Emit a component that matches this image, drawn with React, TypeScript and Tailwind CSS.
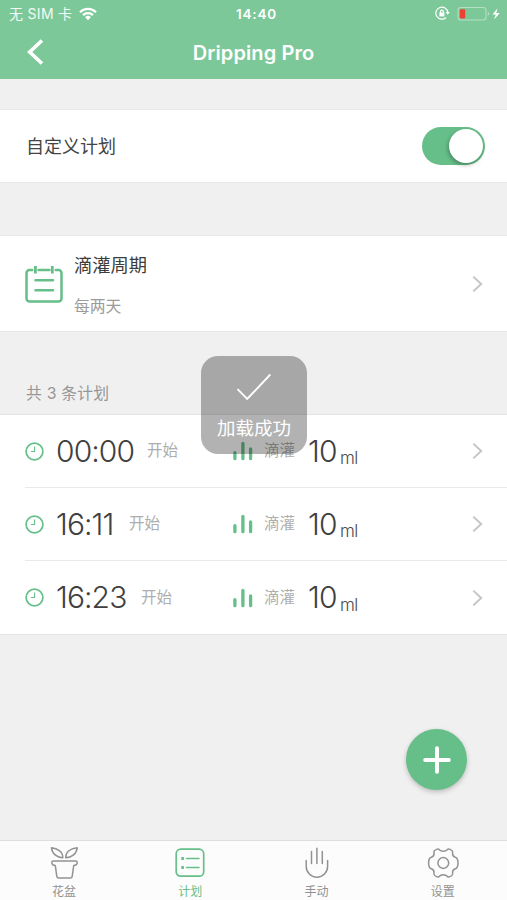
import React from 'react';

interface Plan {
  id: number;
  time: string;
  timeWidth: string;
  amount: number;
}

const plans: Plan[] = [
  { id: 1, time: '00:00', timeWidth: 'w-[91px]', amount: 10 },
  { id: 2, time: '16:11', timeWidth: 'w-[73px]', amount: 10 },
  { id: 3, time: '16:23', timeWidth: 'w-[85px]', amount: 10 },
];

const ChevronRight: React.FC = () => (
  <svg width="11" height="18" viewBox="0 0 11 18" fill="none" stroke="#c4c4c4" strokeWidth="1.9">
    <path d="M1.3 1.6 9.2 9l-7.9 7.4" />
  </svg>
);

const ClockIcon: React.FC = () => (
  <svg width="19" height="19" viewBox="0 0 19 19" fill="none" stroke="#66bf89">
    <circle cx="9.5" cy="9.5" r="8.4" strokeWidth="1.7" />
    <path d="M9.6 4.5v5H6" strokeWidth="1.1" />
  </svg>
);

const BarsIcon: React.FC = () => (
  <svg width="20" height="20" viewBox="0 0 20 20" fill="none" stroke="#66bf89" strokeWidth="3.3" strokeLinecap="round">
    <path d="M1.9 11.7v6M9.9 2.3v15.4M17.6 8v9.7" />
  </svg>
);

const CalendarIcon: React.FC = () => (
  <svg width="38" height="38" viewBox="0 0 38 38" fill="none" stroke="#66bf89" strokeWidth="2.5" strokeLinecap="round">
    <path d="M7.2 5H4.5A3 3 0 0 0 1.5 8v25.5a3 3 0 0 0 3 3h29a3 3 0 0 0 3-3V8a3 3 0 0 0-3-3h-2.7M13.5 5h11" />
    <path d="M10.4 1v7.4M27.3 1v7.4" strokeWidth="2.8" strokeLinecap="butt" />
    <path d="M10.5 15.3H28M10.5 25.3H28" />
  </svg>
);

const StatusBar: React.FC = () => (
  <div className="grid grid-cols-3 items-center h-[27px] pl-[9px] pr-1.5 text-[14px]">
    <div className="flex items-center whitespace-nowrap">
      <span className="w-[70px] tracking-[0.3px] text-white/90">无 SIM 卡</span>
      <svg width="18" height="14" viewBox="0 0 18 14" fill="none" stroke="#fff" strokeWidth="2.3">
        <path d="M1 5.2a11.4 11.4 0 0 1 16 0M4 8.2a7.2 7.2 0 0 1 10 0" />
        <path d="M6.1 10.2a4.2 4.2 0 0 1 5.8 0L9 13.2z" fill="#fff" stroke="none" />
      </svg>
    </div>
    <span className="pt-px pl-[3px] text-center font-semibold text-[13.5px] tracking-[0.8px]">14:40</span>
    <div className="flex items-center justify-end">
      <svg width="15" height="15" viewBox="0 0 15 15" fill="none" stroke="#fff" strokeWidth="1.2">
        <path d="M12.8 6.5A6 6 0 1 0 11 11.5" />
        <path d="M10.6 6.1h4.2l-2.1 2.7z" fill="#fff" stroke="none" />
        <rect x="4.4" y="6.6" width="5" height="3.8" fill="#fff" stroke="none" />
        <path d="M5.500 7V5.600a1.400 1.400 0 0 1 2.800 0V7" />
      </svg>
      <svg className="ml-[7px]" width="44" height="16" viewBox="0 0 44 16" fill="none">
        <rect x="1" y="1.5" width="28" height="12.5" rx="3" stroke="#b5dfc4" strokeWidth="1.1" />
        <path d="M30.8 5.7q3 2 0 4.2z" fill="#b5dfc4" />
        <rect x="2.8" y="3.2" width="5.4" height="9.2" rx="1.2" fill="#ed4134" />
        <path d="m40.5 2.3-5 6.3h3.2l-1.6 5 5.7-6.6h-3.5z" fill="#fff" />
      </svg>
    </div>
  </div>
);

const Header: React.FC = () => (
  <header className="h-[79px] bg-[#7cc899] text-white">
    <StatusBar />
    <div className="grid grid-cols-[100px_1fr_100px] items-center h-[50px]">
      <svg className="ml-[27px]" width="17" height="26" viewBox="0 0 17 26" fill="none" stroke="#fff" strokeWidth="3.7">
        <path d="M15 1.5 2.7 13 15 24.5" />
      </svg>
      <h1 className="pt-px text-center text-[20px] font-semibold tracking-[0.1px]">Dripping Pro</h1>
    </div>
  </header>
);

const PlanRow: React.FC<{ plan: Plan; last: boolean }> = ({ plan, last }) => (
  <li className={`flex items-center h-[73px] ml-[25px] pr-6 ${last ? '' : 'border-b border-[#e9e9e9]'}`}>
    <div className="flex items-center w-[208px] whitespace-nowrap">
      <ClockIcon />
      <span className={`ml-3 text-[30px] font-light tracking-[-0.9px] text-[#404040] ${plan.timeWidth}`}>
        {plan.time}
      </span>
      <span className="text-[15.5px] text-[#aeaeae]">开始</span>
    </div>
    <BarsIcon />
    <span className="ml-[11px] w-[44px] text-[15.5px] text-[#aeaeae]">滴灌</span>
    <span className="w-[32px] text-[30px] font-light tracking-[-0.9px] text-[#404040]">{plan.amount}</span>
    <span className="mt-4 text-[17px] font-light tracking-[-0.6px] text-[#4a4a4a]">ml</span>
    <div className="ml-auto">
      <ChevronRight />
    </div>
  </li>
);

const tabs = [
  {
    label: '花盆',
    icon: (
      <>
        <path d="M3.5 1.8C9 2.5 15 5.5 14.8 11.7 9.5 11.7 4.2 8.2 3.5 1.8zM29.2 1.8C23.5 2.5 17.5 5.5 17.7 11.7 23.3 11.7 28.5 8.2 29.2 1.8z" />
        <path d="M5.3 15h22.4q1.5 0 1.5 1.6 0 2.9-3.5 2.9l-1.5 10.8q-.2 1.6-2 1.6H10.8q-1.8 0-2-1.6L7.3 19.5q-3.5 0-3.5-2.9 0-1.6 1.5-1.6z" />
      </>
    ),
  },
  {
    label: '计划',
    icon: (
      <>
        <rect x="2.2" y="3.2" width="27.5" height="27" rx="4.5" strokeWidth="1.7" />
        <path d="M12.5 12.5H25M12.5 21.5H25" />
        <path d="M7.3 12.5h2.6M7.3 21.5h2.6" strokeWidth="3" strokeLinecap="butt" />
      </>
    ),
  },
  {
    label: '手动',
    icon: <path d="M5.2 14.5v6a10.7 10.7 0 0 0 21.4 0v-6M10.5 5.5v12M15.9 2.2v15.3M21.3 5.5v12" />,
  },
  {
    label: '设置',
    icon: (
      <g transform="translate(16.3 17)">
        <path d="M0-11.7Q2.5-11.7 4.3-13.6 5.5-14.8 8.6-12.5 9.8-11.5 9.3-9.5 9-6.8 12-5.8 14.7-5 14.7 0 14.7 5 12 5.8 9 6.8 9.3 9.5 9.8 11.5 8.6 12.5 5.5 14.8 4.3 13.6 2.5 11.7 0 11.7-2.5 11.7-4.3 13.6-5.5 14.8-8.6 12.5-9.8 11.5-9.3 9.5-9 6.8-12 5.8-14.7 5-14.7 0-14.7-5-12-5.8-9-6.8-9.3-9.5-9.8-11.5-8.6-12.5-5.5-14.8-4.3-13.6-2.5-11.7 0-11.7z" />
        <circle r="5.4" />
      </g>
    ),
  },
];

const TabBar: React.FC<{ active: string }> = ({ active }) => (
  <nav className="grid grid-cols-4 h-[60px] px-px border-t border-[#dedede] bg-[#fcfcfc]">
    {tabs.map((tab) => (
      <div
        key={tab.label}
        className={`flex flex-col items-center pt-[5px] ${tab.label === active ? 'text-[#66bf89]' : 'text-[#929292]'}`}
      >
        <svg width="32" height="34" viewBox="0 0 32 34" fill="none" stroke="currentColor" strokeWidth="1.5" strokeLinecap="round" strokeLinejoin="round">
          {tab.icon}
        </svg>
        <span className="mt-1 text-[12px] leading-[16px]">{tab.label}</span>
      </div>
    ))}
  </nav>
);

const Toast: React.FC<{ message: string }> = ({ message }) => (
  <div className="absolute left-[201px] top-[356px] flex flex-col items-center w-[106px] h-[98px] rounded-[17px] bg-black/30 text-white">
    <svg className="mt-[17px]" width="36" height="28" viewBox="0 0 36 28" fill="none" stroke="#fff" strokeWidth="1.9">
      <path d="M1.5 16.2 11.2 26 34.3 1.5" />
    </svg>
    <span className="mt-[15px] text-[18.5px] leading-[24px]">{message}</span>
  </div>
);

const App: React.FC = () => {
  return (
    <div className="relative flex flex-col w-[507px] h-[900px] overflow-hidden bg-[#f0f0f0] font-['Inter','Noto_Sans_CJK_SC',sans-serif]">
      <Header />

      <main className="flex-1">
        {/* Custom plan switch */}
        <section className="flex items-center justify-between mt-[30px] h-[74px] pl-[26px] pr-[22px] bg-white border-y border-[#e7e7e7]">
          <span className="mt-px text-[18px] text-[#444444]">自定义计划</span>
          <div className="flex items-center justify-end w-[63px] h-[38px] pr-0.5 rounded-full bg-[#66bf89]">
            <div className="size-[34px] rounded-full bg-white shadow-[-1px_2px_4px_rgba(0,0,0,0.3)]" />
          </div>
        </section>

        {/* Watering cycle */}
        <section className="flex items-center mt-[52px] h-[97px] pl-[25px] pr-6 bg-white border-y border-[#e7e7e7]">
          <CalendarIcon />
          <div className="flex flex-col gap-[19px] mt-[3px] ml-[11px]">
            <span className="text-[18.3px] leading-[24px] text-[#3c3c3c]">滴灌周期</span>
            <span className="text-[15.8px] leading-[22px] text-[#9c9c9c]">每两天</span>
          </div>
          <div className="ml-auto">
            <ChevronRight />
          </div>
        </section>

        {/* Plan list */}
        <div className="flex items-end h-[82px] pl-[26px] pb-2 text-[15.8px] leading-[24px] tracking-[0.2px] text-[#969696]">
          共 {plans.length} 条计划
        </div>
        <ul className="bg-white border-y border-[#e4e4e4]">
          {plans.map((plan, index) => (
            <PlanRow key={plan.id} plan={plan} last={index === plans.length - 1} />
          ))}
        </ul>
      </main>

      <TabBar active="计划" />

      {/* Add plan button */}
      <button className="absolute left-[406px] top-[729px] flex items-center justify-center size-[61px] rounded-full bg-[#66bf89] shadow-[0_2px_5px_rgba(0,0,0,0.22)]">
        <svg width="28" height="28" viewBox="0 0 28 28" stroke="#fff" strokeWidth="4" strokeLinecap="round">
          <path d="M14 2.2v23.6M2.2 14h23.6" />
        </svg>
      </button>

      <Toast message="加载成功" />
    </div>
  );
};

export default App;
